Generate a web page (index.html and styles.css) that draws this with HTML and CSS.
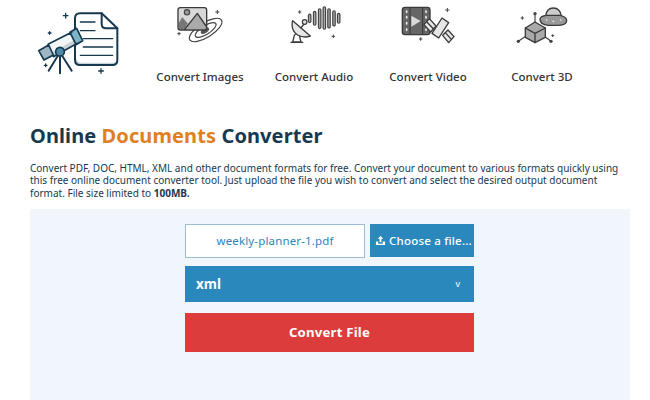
FILE: index.html
```html
<!DOCTYPE html>
<html lang="en">
  <head>
    <meta charset="UTF-8" />
    <meta name="viewport" content="width=device-width, initial-scale=1.0" />
    <title>Online Documents Converter</title>
    <link rel="stylesheet" href="styles.css">
  </head>
  <body>
    <header class="top">
      <a class="logo" href="#" aria-label="Home">
        <svg class="logo-icon" viewBox="0 0 390 270">
          <path class="doc-fill" d="M180 40H245L292 85V180Q292 195 277 195H180Q165 195 165 180V55Q165 40 180 40Z" />
          <path class="shade" d="M168 170Q170 188 185 188H288V195H178Q166 195 166 180Z" />
          <path class="ink" d="M180 40H245L292 85V180Q292 195 277 195H180Q165 195 165 180V55Q165 40 180 40Z" />
          <path class="ink" d="M245 40V72Q245 85 258 85H292" />
          <path class="ink thin" d="M181 66H225M181 92H225M190 116H278M190 141H278M181 166H278" />
          <path class="tube" d="M84 133L155 97L172 130L100 170Z" />
          <path class="shade" d="M100 170L172 130L167 118L94 158Z" />
          <path class="tube-dark" d="M150 97L170 85L188 122L168 134Z" />
          <path class="tube-grey" d="M56 152L86 135L100 165L72 180Z" />
          <path class="ink scope" d="M84 133L155 97M100 170L172 130M150 97L170 85L188 122L168 134ZM56 152L86 135L100 165L72 180Z" />
          <path class="ink" d="M113 168L86 212M120 168V220M127 168L155 212" />
          <circle class="knob" cx="120" cy="155" r="13" />
          <path class="ink thin" d="M137 40V54M130 47H144M243 206V220M236 213H250M89 95V103M85 99H93M77 192V200M73 196H81" />
        </svg>
      </a>
      <nav class="tools">
        <a class="tool" href="#">
          <svg class="tool-icon" viewBox="-21 0 342 198">
            <ellipse class="g-line" cx="167" cy="90" rx="56" ry="22" transform="rotate(-32 167 90)" />
            <ellipse class="g-line" cx="167" cy="90" rx="36" ry="13" transform="rotate(-32 167 90)" />
            <ellipse class="g-core" cx="165" cy="92" rx="14" ry="7" transform="rotate(-32 165 92)" />
            <rect class="g-light" x="84" y="23" width="86" height="67" rx="7" />
            <path class="g-mid" d="M86 70L96 52L116 72L142 40L168 78V84Q168 88 162 88H90Q86 88 86 84Z" />
            <path class="g-dark" d="M86 88V70L97 52L112 70L104 88Z" />
            <circle class="g-mid-line" cx="111" cy="37" r="8" />
            <path class="g-frame" d="M104 88L142 40L168 78" />
            <rect class="g-frame" x="84" y="23" width="86" height="67" rx="7" />
            <path class="g-star" d="M202 31V41M197 36H207M87 97V105M83 101H91" />
          </svg>
          <span>Convert Images</span>
        </a>
        <a class="tool" href="#">
          <svg class="tool-icon" viewBox="318 0 342 198">
            <path class="g-bars" d="M476 46V64M491 38V72M506 30V82M520 24V84M534 30V80M549 36V74M563 44V66" />
            <path class="g-bars-in" d="M476 46V64M491 38V72M506 30V82M520 24V84M534 30V80M549 36V74M563 44V66" />
            <path class="g-frame" d="M425 126L430 106Q437 96 445 106L450 126ZM420 127H455" />
            <path class="g-panel" d="M425 62Q418 90 440 105Q458 115 478 108Z" />
            <path class="g-frame" d="M450 84L462 68" />
            <circle class="g-white" cx="461" cy="66" r="7" />
            <path class="g-star" d="M446 32V40M442 36H450M547 105V113M543 109H551" />
          </svg>
          <span>Convert Audio</span>
        </a>
        <a class="tool" href="#">
          <svg class="tool-icon" viewBox="3 0 342 198">
            <rect class="g-dark solid" x="97" y="22" width="83" height="82" rx="8" />
            <path class="g-light-line" d="M120 24V102M158 24V102" />
            <path class="g-light" d="M124 47L152 63L124 80Z" />
            <path class="g-dots" d="M110 33V37M110 50V54M110 68V72M110 87V91M168 33V37M168 50V54M168 68V72M168 87V91" />
            <path class="g-panel" d="M162 74L178 56L198 78L182 96ZM218 106L234 90L252 110L236 128Z" />
            <path class="g-panel" d="M186 100L216 54L236 68L206 114Z" />
            <path class="g-frame" d="M170 65L190 86M226 98L244 118" />
            <path class="g-star" d="M232 25V35M227 30H237M152 113V121M148 117H156" />
          </svg>
          <span>Convert Video</span>
        </a>
        <a class="tool" href="#">
          <svg class="tool-icon" viewBox="345 0 342 198">
            <path class="g-mid-line" d="M495 42V68M465 110L445 124M525 110L543 124" />
            <path class="g-mid solid-line" d="M495 66L526 84V112L495 128L466 112V84Z" />
            <path class="g-frame" d="M466 84L495 100L526 84M495 100V128" />
            <circle class="g-dot" cx="495" cy="41" r="5" />
            <circle class="g-dot" cx="445" cy="124" r="5" />
            <circle class="g-dot" cx="543" cy="124" r="5" />
            <path class="g-light-stroke" d="M527 48Q530 24 550 24Q570 24 574 48Z" />
            <path class="g-mid-stroke" d="M510 58Q510 48 530 46H570Q590 50 590 62Q590 76 560 76H535Q510 74 510 58Z" />
            <path class="g-dots" d="M530 60V60.1M550 64V64.1M572 60V60.1" />
            <path class="g-star" d="M457 50V58M453 54H461M548 104V110M545 107H551" />
          </svg>
          <span>Convert 3D</span>
        </a>
      </nav>
    </header>

    <main class="content">
      <h1>Online <em>Documents</em> Converter</h1>
      <p class="intro">
        Convert PDF, DOC, HTML, XML and other document formats for free. Convert your document to various formats quickly using<br>
        this free online document converter tool. Just upload the file you wish to convert and select the desired output document<br>
        format. File size limited to <strong>100MB.</strong>
      </p>
      <section class="panel">
        <form class="converter" action="#">
          <div class="file-row">
            <div class="file-name">weekly-planner-1.pdf</div>
            <button type="button" class="file-btn">
              <svg class="upload" viewBox="0 0 12 12">
                <path d="M6 1L9 4H7V8H5V4H3ZM1 7H3.5V9.5H8.5V7H11V11H1Z" />
              </svg>
              Choose a file...
            </button>
          </div>
          <div class="format-select"><span>xml</span><span class="caret">v</span></div>
          <button type="button" class="convert-btn">Convert File</button>
        </form>
      </section>
    </main>
  </body>
</html>
```

FILE: styles.css
```css
html,
body {
  height: 100%;
}

body {
  margin: 0;
  overflow: hidden;
  background: #fff;
  color: #17394f;
  font-family: "Noto Sans", sans-serif;
}

a {
  color: inherit;
  text-decoration: none;
}

.top {
  display: flex;
  height: 90px;
  padding-left: 20px;
  margin-bottom: 31px;
}

.logo {
  width: 123px;
}

.logo-icon {
  display: block;
  width: 130px;
  height: 90px;
  filter: blur(0.3px);
}

.tools {
  display: grid;
  grid-template-columns: repeat(4, 114px);
}

.tool {
  display: flex;
  flex-direction: column;
  align-items: center;
  color: #333;
  font-size: 11.5px;
  font-weight: 500;
}

.tool-icon {
  display: block;
  width: 114px;
  height: 66px;
  margin-bottom: 3px;
  filter: blur(0.3px);
}

.content {
  padding: 0 20px 0 30px;
}

h1 {
  margin: 0 0 11px;
  font-size: 20px;
  line-height: 30px;
  font-weight: 700;
  letter-spacing: 0.1px;
}

h1 em {
  color: #e07f1f;
  font-style: normal;
}

.intro {
  margin: 0 0 10px;
  width: 600px;
  font-size: 10px;
  line-height: 12.3px;
}

.panel {
  width: 600px;
  height: 200px;
  padding-top: 15px;
  box-sizing: border-box;
  background: #f1f6fd;
}

.converter {
  display: flex;
  flex-direction: column;
  width: 289px;
  margin-left: 155px;
}

.file-row {
  display: flex;
  justify-content: space-between;
  margin-bottom: 8px;
}

.file-name {
  display: flex;
  align-items: center;
  justify-content: center;
  width: 180px;
  height: 34px;
  box-sizing: border-box;
  border: 1px solid #9dbdd0;
  background: #fff;
  color: #2b86b9;
  font-size: 11.5px;
  letter-spacing: 0.15px;
}

.file-btn {
  display: flex;
  align-items: center;
  justify-content: center;
  gap: 3px;
  width: 104px;
  height: 33px;
  padding: 0 0 0 3px;
  border: 0;
  background: #2b88bd;
  color: #fff;
  font-family: inherit;
  font-size: 11.5px;
  font-weight: 500;
  letter-spacing: 0.2px;
  white-space: nowrap;
}

.upload {
  width: 11px;
  height: 11px;
  fill: #fff;
}

.format-select {
  display: flex;
  align-items: center;
  justify-content: space-between;
  height: 36px;
  padding: 0 14px 0 11px;
  margin-bottom: 11px;
  background: #2b88bd;
  color: #fff;
  font-size: 13.5px;
  font-weight: 700;
}

.caret {
  font-size: 9px;
  font-weight: 400;
}

.convert-btn {
  height: 39px;
  padding: 0;
  border: 0;
  background: #dc3c3c;
  color: #fff;
  font-family: inherit;
  font-size: 13.2px;
  font-weight: 700;
  letter-spacing: 0.2px;
}

/* logo strokes */
.ink {
  fill: none;
  stroke: #17394f;
  stroke-width: 6;
  stroke-linecap: round;
  stroke-linejoin: round;
}

.ink.thin {
  stroke-width: 4;
}

.ink.scope {
  stroke-width: 5;
}

.doc-fill {
  fill: #fff;
}

.shade {
  fill: #c9d3d8;
}

.tube {
  fill: #f2f5f6;
}

.tube-dark {
  fill: #7fb3c6;
}

.tube-grey {
  fill: #9fb6c2;
}

.knob {
  fill: #4f8ba6;
  stroke: #17394f;
  stroke-width: 5;
}

/* grey nav icons */
.g-frame,
.g-line,
.g-star,
.g-mid-line,
.g-light-line,
.g-dots,
.g-panel,
.g-bars,
.g-bars-in,
.g-light-stroke,
.g-mid-stroke,
.solid-line {
  stroke-linecap: round;
  stroke-linejoin: round;
}

.g-frame {
  fill: none;
  stroke: #3a3a3a;
  stroke-width: 4;
}

.g-line {
  fill: none;
  stroke: #444;
  stroke-width: 3.5;
}

.g-core {
  fill: #555;
}

.g-star {
  fill: none;
  stroke: #444;
  stroke-width: 3;
}

.g-light {
  fill: #d8d8d8;
}

.g-mid {
  fill: #aaa;
}

.g-dark {
  fill: #777;
}

.g-dark.solid {
  fill: #666;
  stroke: #3a3a3a;
  stroke-width: 4;
}

.g-mid-line {
  fill: #999;
  stroke: #444;
  stroke-width: 3.5;
}

.g-bars {
  fill: none;
  stroke: #444;
  stroke-width: 11;
}

.g-bars-in {
  fill: none;
  stroke: #a5a5a5;
  stroke-width: 4;
}

.g-white {
  fill: #ddd;
  stroke: #3a3a3a;
  stroke-width: 3.5;
}

.g-light-line {
  fill: none;
  stroke: #333;
  stroke-width: 3;
}

.g-dots {
  fill: none;
  stroke: #eee;
  stroke-width: 5;
}

.g-panel {
  fill: #e6e6e6;
  stroke: #3a3a3a;
  stroke-width: 4;
}

.solid-line {
  stroke: #3a3a3a;
  stroke-width: 4;
}

.g-dot {
  fill: #444;
}

.g-light-stroke {
  fill: #ccc;
  stroke: #3a3a3a;
  stroke-width: 4;
}

.g-mid-stroke {
  fill: #999;
  stroke: #3a3a3a;
  stroke-width: 4;
}
```
